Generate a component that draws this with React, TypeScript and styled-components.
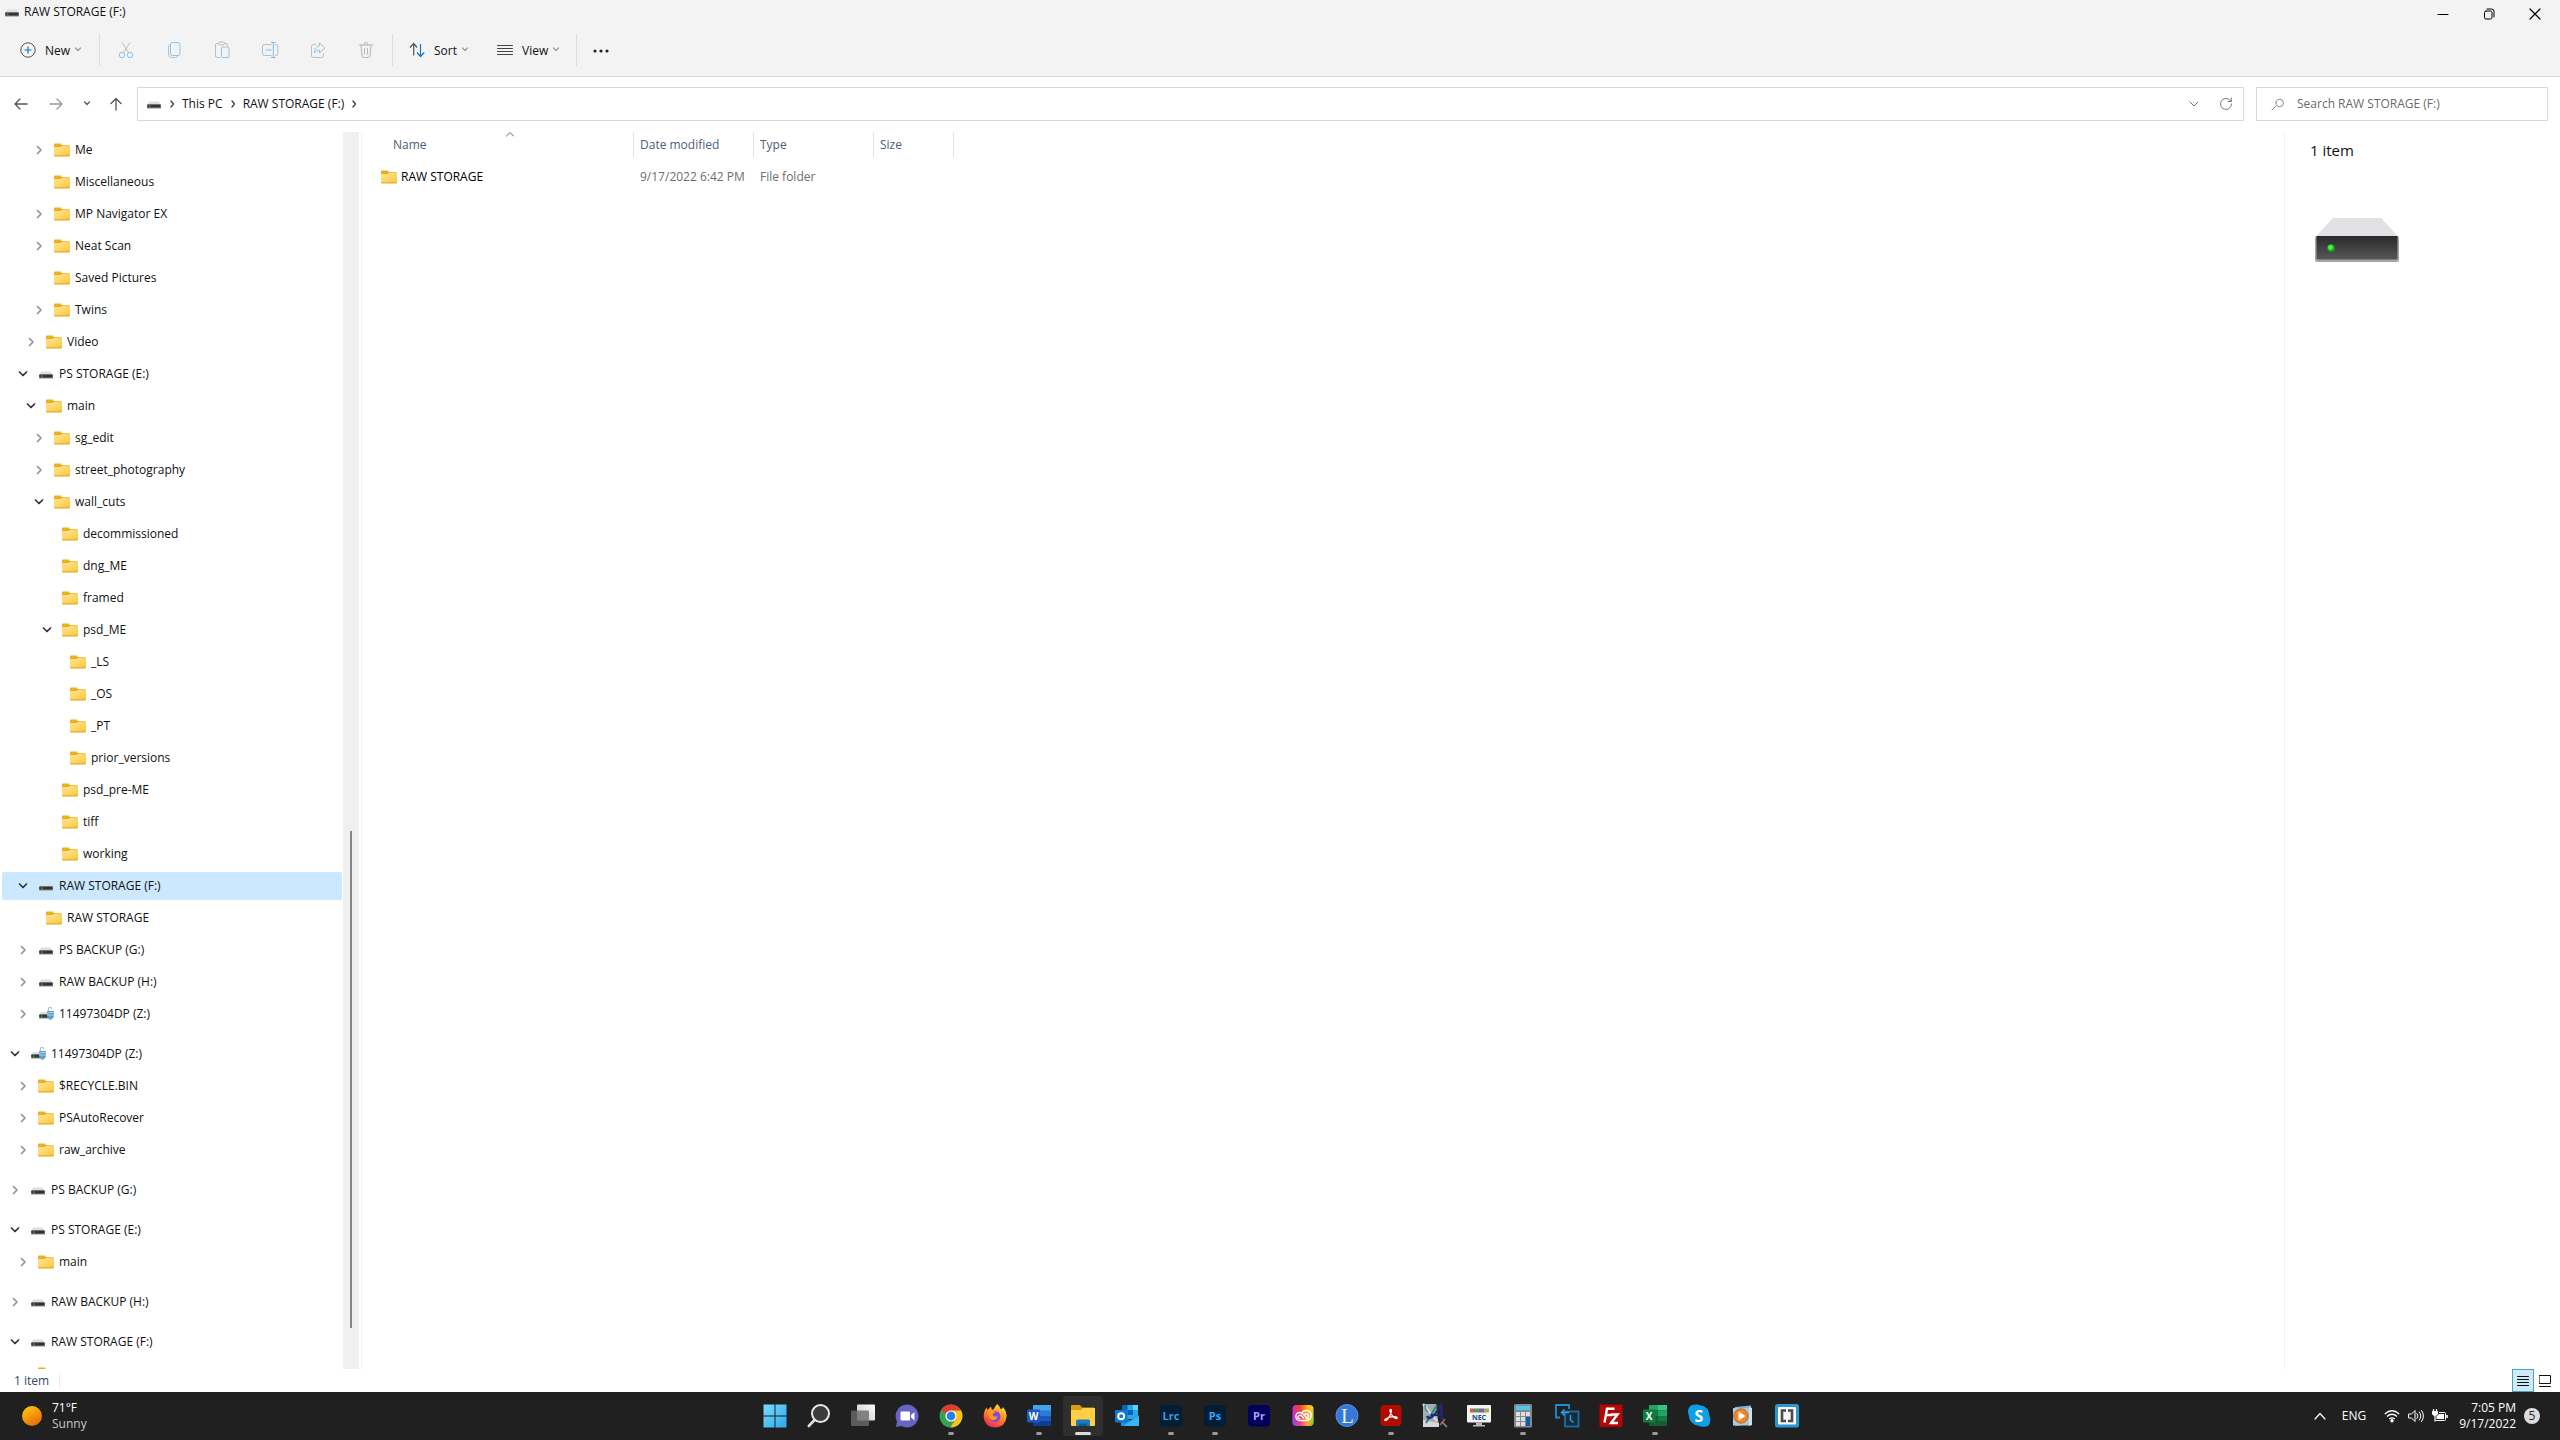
import React from "react";
import styled, { createGlobalStyle } from "styled-components";

const GlobalStyle = createGlobalStyle`
  * { box-sizing: border-box; }
  body { margin: 0; font-family: "Open Sans", "Noto Sans", sans-serif; font-size: 12px; line-height: 16px; color: #111; background: #fff; }
  button, input { font: inherit; color: inherit; border: 0; background: none; padding: 0; margin: 0; }
  svg { display: block; flex: none; }
`;

/* ---------- window frame ---------- */

const Desktop = styled.div`
  display: flex;
  flex-direction: column;
  height: 100vh;
  overflow: hidden;
`;

const TitleBar = styled.header`
  display: flex;
  justify-content: space-between;
  height: 28px;
  padding-left: 4px;
  background: #f3f3f3;
`;

const Title = styled.h1`
  display: flex;
  align-items: center;
  gap: 4px;
  height: 24px;
  margin: 0;
  font-size: 12px;
  font-weight: 400;
`;

const WindowButtons = styled.div`
  display: flex;
  padding-right: 2px;
`;

const WindowButton = styled.button`
  display: grid;
  place-items: center;
  width: 46px;
  height: 28px;
`;

const Toolbar = styled.div`
  display: flex;
  align-items: center;
  height: 49px;
  padding: 0 0 4px 12px;
  background: #f3f3f3;
  border-bottom: 1px solid #dcdcdc;
`;

const ToolButton = styled.button<{ $width: number }>`
  display: flex;
  align-items: center;
  width: ${(p) => p.$width}px;
  height: 32px;
  padding-left: 8px;
`;

const ToolLabel = styled.span`
  padding: 2px 4px 0 9px;
`;

const IconButton = styled.button<{ $width?: number }>`
  display: grid;
  place-items: center;
  width: ${(p) => p.$width ?? 48}px;
  height: 32px;
`;

const ToolDivider = styled.span<{ $before: number; $after: number }>`
  width: 1px;
  height: 32px;
  margin: 0 ${(p) => p.$after}px 0 ${(p) => p.$before}px;
  background: #dedede;
`;

const AddressRow = styled.div`
  display: flex;
  padding: 10px 12px 11px 4px;
`;

const NavButtons = styled.div`
  display: flex;
  align-items: center;
  padding-right: 5px;
`;

const AddressBar = styled.nav`
  display: flex;
  flex: 1;
  align-items: center;
  height: 34px;
  padding-left: 8px;
  border: 1px solid #d9d9d9;
`;

const Crumb = styled.button`
  height: 30px;
`;

const CrumbArrow = styled.span`
  display: grid;
  place-items: center;
  width: 20px;
`;

const AddressTools = styled.div`
  display: flex;
  margin-left: auto;
`;

const SearchBox = styled.label`
  display: flex;
  align-items: center;
  gap: 13px;
  width: 292px;
  height: 34px;
  margin-left: 12px;
  padding-left: 14px;
  border: 1px solid #d9d9d9;
`;

const SearchInput = styled.input`
  flex: 1;
  min-width: 0;
  outline: 0;
  &::placeholder { color: #6b6b6b; opacity: 1; }
`;

/* ---------- panes ---------- */

const Panes = styled.main`
  display: flex;
  flex: 1;
  min-height: 0;
`;

const TreePane = styled.aside`
  display: flex;
  width: 362px;
  padding-right: 2px;
  border-right: 1px solid #f2f2f2;
`;

const Tree = styled.ul`
  flex: 1;
  min-width: 0;
  margin: 0;
  padding: 2px 1px 0 2px;
  overflow: hidden;
  list-style: none;
`;

const TreeItem = styled.li<{ $gap: boolean }>`
  padding: ${(p) => (p.$gap ? 10 : 2)}px 0 2px;
`;

const TreeRow = styled.button<{ $level: number; $selected?: boolean }>`
  display: flex;
  align-items: center;
  width: 100%;
  height: 28px;
  padding-left: ${(p) => 7 + p.$level * 8}px;
  border-radius: 2px;
  background: ${(p) => (p.$selected ? "#cce8ff" : "transparent")};
`;

const Expander = styled.span`
  display: grid;
  place-items: center;
  width: 12px;
  height: 16px;
  margin-right: 9px;
`;

const RowLabel = styled.span`
  padding-left: 5px;
  white-space: nowrap;
`;

const ScrollTrack = styled.div`
  display: grid;
  grid-template-rows: 699fr 497fr 41fr;
  justify-items: center;
  width: 16px;
  background: #f0f0f0;
`;

const ScrollThumb = styled.div`
  grid-row: 2;
  width: 2px;
  background: #858585;
`;

const FilePane = styled.section`
  flex: 1;
  min-width: 0;
`;

const FileTable = styled.table`
  table-layout: fixed;
  width: 592px;
  border-collapse: separate;
  border-spacing: 0;
  text-align: left;
`;

const HeadCell = styled.th<{ $width: number; $indent?: number }>`
  position: relative;
  width: ${(p) => p.$width}px;
  height: 25px;
  padding: 0 0 0 ${(p) => p.$indent ?? 6}px;
  border-right: 1px solid #e2e2e2;
  color: #4c607a;
  font-weight: 400;
`;

const SortMark = styled.span`
  position: absolute;
  top: -1px;
  left: 50%;
  padding-left: 7px;
`;

const Cell = styled.td`
  height: 40px;
  padding: 0 0 0 6px;
  color: #6d6d6d;
  white-space: nowrap;
`;

const NameCell = styled(Cell)`
  padding-left: 19px;
  color: #000;
`;

const FileName = styled.span`
  display: flex;
  align-items: center;
  gap: 4px;
`;

const DetailPane = styled.aside`
  width: 276px;
  padding: 7px 0 0 25px;
  border-left: 1px solid #f2f2f2;
`;

const DetailTitle = styled.h2`
  margin: 0 0 57px;
  font-size: 15px;
  font-weight: 400;
  line-height: 22px;
`;

const DriveArt = styled.div`
  padding-left: 5px;
`;

const StatusBar = styled.footer`
  display: flex;
  align-items: center;
  justify-content: space-between;
  height: 23px;
  padding: 0 4px 0 14px;
  color: #33466b;
`;

const StatusText = styled.span`
  padding-right: 10px;
  border-right: 1px solid #ececec;
`;

const ViewButtons = styled.div`
  display: flex;
`;

const ViewButton = styled.button<{ $active?: boolean }>`
  display: grid;
  place-items: center;
  width: 22px;
  height: 23px;
  border: 1px solid ${(p) => (p.$active ? "#4ba3c3" : "transparent")};
  background: ${(p) => (p.$active ? "#cfeaf6" : "transparent")};
`;

/* ---------- taskbar ---------- */

const Taskbar = styled.footer`
  display: grid;
  grid-template-columns: 1fr auto 1fr;
  height: 48px;
  background: #202020;
  color: #fff;
`;

const Weather = styled.button`
  display: flex;
  align-items: center;
  gap: 10px;
  padding-left: 22px;
  text-align: left;
`;

const Muted = styled.span`
  display: block;
  color: #c8c8c8;
`;

const Apps = styled.div`
  display: flex;
  padding-left: 2px;
`;

const AppButton = styled.button<{ $active?: boolean }>`
  display: flex;
  flex-direction: column;
  align-items: center;
  justify-content: flex-end;
  gap: 4px;
  width: 40px;
  height: 40px;
  margin: 4px 2px;
  border-radius: 4px;
  background: ${(p) => (p.$active ? "#2f2f2f" : "transparent")};
`;

const RunMark = styled.span<{ $state: number }>`
  width: ${(p) => (p.$state === 2 ? 16 : 6)}px;
  height: 3px;
  margin-bottom: 1px;
  border-radius: 2px;
  background: ${(p) => (p.$state === 2 ? "#dcdcdc" : p.$state === 1 ? "#9a9a9a" : "transparent")};
`;

const Tray = styled.div`
  display: flex;
  align-items: center;
  justify-content: flex-end;
  padding-right: 20px;
`;

const TrayButton = styled.button<{ $width: number }>`
  display: grid;
  place-items: center;
  width: ${(p) => p.$width}px;
  height: 40px;
`;

const Clock = styled.button`
  width: 72px;
  padding-right: 8px;
  text-align: right;
`;

const Badge = styled.span`
  width: 16px;
  height: 16px;
  border-radius: 50%;
  background: #dcdcdc;
  color: #222;
  font-size: 12px;
  text-align: center;
`;

/* ---------- small icons ---------- */

const Line = ({ d, w = 16, h = 16, color = "#555", sw = 1 }: { d: string; w?: number; h?: number; color?: string; sw?: number }) => (
  <svg width={w} height={h} viewBox={`0 0 ${w} ${h}`} fill="none" stroke={color} strokeWidth={sw} strokeLinecap="round" strokeLinejoin="round">
    <path d={d} />
  </svg>
);

const ChevronDown = ({ color = "#9a9a9a" }: { color?: string }) => <Line w={8} h={8} d="M1.5 2l2.500 2.500L6.500 2" color={color} sw={1.2} />;
const CrumbChevron = () => <Line w={6} h={8} d="M2 1l2.5 3L2 7" color="#444" sw={1.4} />;

const FolderIcon = () => (
  <svg width="16" height="16" viewBox="0 0 16 16">
    <defs>
      <linearGradient id="folder" x1="0" y1="0" x2="1" y2="1">
        <stop offset="0" stopColor="#ffe694" />
        <stop offset="1" stopColor="#fcc63e" />
      </linearGradient>
    </defs>
    <path d="M0 2.5q0-1 1-1h5.5l1.8 1.7H15q1 0 1 1V8H0z" fill="#e8ae24" />
    <path d="M0 5h6.5l1.6-1H16v9.4q0 .8-1 .8H1q-1 0-1-.8z" fill="url(#folder)" />
    <path d="M.3 13.9h15.4" stroke="#dfa32b" />
  </svg>
);

const DriveIcon = () => (
  <svg width="16" height="16" viewBox="0 0 16 16">
    <path d="M3.5 5.5h9L15 9H1z" fill="#dedfe1" />
    <rect x="1" y="8.5" width="14" height="4" rx=".6" fill="#8b8b8b" />
    <rect x="1.5" y="8.5" width="13" height="3" fill="#333" />
    <rect x="3" y="9.5" width="1.4" height="1.2" fill="#3bdc4a" />
  </svg>
);

const LockedDriveIcon = () => (
  <svg width="16" height="16" viewBox="0 0 16 16">
    <path d="M3 6h8v3H1z" fill="#dedfe1" />
    <rect x="1" y="8.5" width="11" height="4" rx=".6" fill="#8b8b8b" />
    <rect x="1.5" y="8.5" width="10" height="3" fill="#333" />
    <rect x="3" y="9.5" width="1.4" height="1.2" fill="#3bdc4a" />
    <path d="M10.4 5V3.2q0-1.8 1.7-1.8 1.6 0 1.8 1.6" fill="none" stroke="#b9bcc2" strokeWidth="1.2" />
    <path d="M9 5h7v5q0 2-3.5 3.4Q9 12 9 10z" fill="#5aa1d3" />
    <path d="M9 6.7h7M9 9h7" stroke="#b6d9ef" strokeWidth=".9" />
    <path d="M10 11.5q2.500 2 5 0l-1 1.700-1.500 .8-1.500-.8z" fill="#9ea3a8" />
  </svg>
);

const BigDrive = () => (
  <svg width="84" height="44" viewBox="0 0 84 44">
    <defs>
      <linearGradient id="front" x1="0" y1="0" x2="0" y2="1">
        <stop offset="0" stopColor="#2a2a2a" />
        <stop offset="1" stopColor="#575757" />
      </linearGradient>
    </defs>
    <path d="M18 0h48l17 18.500H1z" fill="#e1e1e5" />
    <rect y="18" width="84" height="26" rx="2" fill="#a6a6a6" />
    <path d="M1.500 18h81v22q0 1.500-1.500 1.500H3q-1.500 0-1.500-1.500z" fill="url(#front)" />
    <circle cx="16" cy="30" r="3.800" fill="#18a91e" />
    <circle cx="15.500" cy="29.500" r="2.400" fill="#4df04d" />
  </svg>
);

/* ---------- toolbar icons ---------- */

const NewIcon = () => (
  <svg width="16" height="16" viewBox="0 0 16 16" fill="none">
    <circle cx="8" cy="8" r="7.200" stroke="#555" />
    <path d="M8 4.500v7M4.500 8h7" stroke="#1078c8" strokeWidth="1.200" />
  </svg>
);
const CutIcon = () => (
  <svg width="16" height="18" viewBox="0 0 16 18" fill="none">
    <path d="M4 1.500l6.500 10M12 1.500l-6.500 10" stroke="#bdbdbd" />
    <circle cx="4" cy="14" r="2.700" stroke="#92c3e6" />
    <circle cx="12" cy="14" r="2.700" stroke="#92c3e6" />
  </svg>
);
const CopyIcon = () => (
  <svg width="16" height="18" viewBox="0 0 16 18" fill="none">
    <path d="M4.500 3.500Q2.500 4 2.500 6v7.500q0 3 3 3h4q1.500 0 2-1.500" stroke="#a9c2d4" />
    <rect x="4.500" y="1.500" width="9.500" height="13" rx="2" stroke="#92c3e6" />
  </svg>
);
const PasteIcon = () => (
  <svg width="16" height="18" viewBox="0 0 16 18" fill="none">
    <path d="M6 16.500H3q-1.500 0-1.500-1.500V4q0-1.500 1.500-1.500h1.500m6 0H12q1.500 0 1.500 1.500v.8" stroke="#bdbdbd" />
    <rect x="4.500" y="1" width="6" height="2.800" rx="1.200" stroke="#bdbdbd" />
    <rect x="7.500" y="6" width="7.500" height="10.500" rx="1" stroke="#92c3e6" />
  </svg>
);
const RenameIcon = () => (
  <svg width="18" height="18" viewBox="0 0 18 18" fill="none">
    <path d="M10.500 3.500H3.500q-2 0-2 2v7q0 2 2 2h7M14 3.500h.8q2 0 2 2v7q0 2-2 2H14" stroke="#b5bcc2" />
    <path d="M10 1.500h4.500M10 16.500h4.500M12.300 1.500v15M4.500 9h6" stroke="#7fb9e2" />
  </svg>
);
const ShareIcon = () => (
  <svg width="16" height="18" viewBox="0 0 16 18" fill="none">
    <path d="M6 3.500H3.500q-2 0-2 2v9q0 2 2 2h8q2 0 2-2v-2" stroke="#bdbdbd" />
    <path d="M9.500 2l5.500 5-5.500 5V9.300Q6 9 4.500 12q0-6.500 5-7.200z" stroke="#92c3e6" strokeLinejoin="round" />
  </svg>
);
const TrashIcon = () => <Line w={16} h={18} color="#b5b5b5" d="M1.500 4h13M6 4Q6 1.500 8 1.500T10 4M3 4l1 11q.2 1.500 1.500 1.500h5q1.300 0 1.500-1.500l1-11M6.500 7.500v5.500M9.500 7.500v5.500" />;
const SortIcon = () => (
  <svg width="16" height="16" viewBox="0 0 16 16" fill="none">
    <path d="M1 5.500l3.700-4 3.300 4M4.700 2v11.500" stroke="#555" strokeWidth="1.200" />
    <path d="M8 10.500l3.500 4 3.700-4M11.500 2v12" stroke="#1078c8" strokeWidth="1.200" />
  </svg>
);

/* ---------- taskbar icons ---------- */

const AppSvg = ({ children }: { children: React.ReactNode }) => (
  <svg width="24" height="24" viewBox="0 0 24 24" overflow="visible">{children}</svg>
);

const IconText = styled.text<{ $size: number; $serif?: boolean }>`
  font-family: ${(p) => (p.$serif ? '"Liberation Serif", serif' : '"Open Sans", sans-serif')};
  font-size: ${(p) => p.$size}px;
  font-weight: ${(p) => (p.$serif ? 400 : 700)};
  text-anchor: middle;
`;

const AdobeTile = ({ bg, fg, label }: { bg: string; fg: string; label: string }) => (
  <AppSvg>
    <rect x="1" y="1" width="22" height="21.500" rx="4" fill={bg} />
    <IconText x="12" y="16" $size={11} fill={fg}>{label}</IconText>
  </AppSvg>
);

const appList: { name: string; state?: number; icon: React.ReactNode }[] = [
  {
    name: "Start",
    icon: (
      <AppSvg>
        <defs>
          <linearGradient id="win" x1="0" y1="0" x2="1" y2="1" gradientUnits="objectBoundingBox">
            <stop offset="0" stopColor="#7bdcfb" />
            <stop offset="1" stopColor="#2aa7ee" />
          </linearGradient>
        </defs>
        <path d="M.5.500h11v11H.5zM12.500.500h11v11h-11zM.5 12.500h11v11H.5zM12.500 12.500h11v11h-11z" fill="url(#win)" />
      </AppSvg>
    ),
  },
  {
    name: "Search",
    icon: (
      <AppSvg>
        <path d="M7.500 16L1.800 22" stroke="#ddd" strokeWidth="2.600" strokeLinecap="round" />
        <circle cx="13.500" cy="9.500" r="8.500" fill="#3b3b3b" stroke="#e8e8e8" strokeWidth="2" />
      </AppSvg>
    ),
  },
  {
    name: "Task View",
    icon: (
      <AppSvg>
        <defs>
          <linearGradient id="task" x1="1" y1="0" x2="0" y2="1">
            <stop offset="0" stopColor="#fff" />
            <stop offset="1" stopColor="#c4c4c4" />
          </linearGradient>
        </defs>
        <rect x="6" y=".5" width="18" height="16" rx="1" fill="url(#task)" />
        <rect x="0" y="6.500" width="18" height="15.500" rx="1" fill="#6b6b6b" opacity=".8" />
      </AppSvg>
    ),
  },
  {
    name: "Chat",
    icon: (
      <AppSvg>
        <path d="M12 .5a11.500 11.500 0 1 1-5.500 21.600L1 23l1-5.500A11.500 11.500 0 0 1 12 .5z" fill="#6764c4" />
        <rect x="5.500" y="7.500" width="9.500" height="9" rx="1" fill="#fff" />
        <path d="M16 11l3.500-3v8.500L16 13.500z" fill="#fff" />
      </AppSvg>
    ),
  },
  {
    name: "Chrome",
    state: 1,
    icon: (
      <AppSvg>
        <circle cx="12" cy="12" r="11.500" fill="#34a153" />
        <path d="M12 12L2 6.200A11.500 11.500 0 0 1 22 6.500z" fill="#e23b2e" />
        <path d="M12 6.500h10A11.500 11.500 0 0 1 11.500 23.500L17 14z" fill="#fbc116" />
        <circle cx="12" cy="12" r="5.600" fill="#fff" />
        <circle cx="12" cy="12" r="4.400" fill="#2b7de9" />
      </AppSvg>
    ),
  },
  {
    name: "Firefox",
    icon: (
      <AppSvg>
        <defs>
          <linearGradient id="fox" x1=".8" y1="0" x2=".3" y2="1">
            <stop offset="0" stopColor="#ffe23c" />
            <stop offset=".5" stopColor="#ff8a1f" />
            <stop offset="1" stopColor="#f0245c" />
          </linearGradient>
        </defs>
        <path d="M14 0q3 2 3.500 5Q20 5 20 3q4 5 3.500 10-1 10-11.500 10.500Q1.500 23 .7 13 .6 7 3.500 3.500L4.500 6 8 2.500Q8 5 10 6z" fill="url(#fox)" />
        <circle cx="12" cy="12.500" r="5.500" fill="#8a48d8" />
        <path d="M5 8q4-2 8 .5-3 0-3.500 2.500 2 3 5 1-1 4.500-5 4-4-1-4.500-8z" fill="#ff9a22" />
      </AppSvg>
    ),
  },
  {
    name: "Word",
    state: 1,
    icon: (
      <AppSvg>
        <path d="M6 1h18v6H6z" fill="#41a5ee" />
        <path d="M6 6.500h18V12H6z" fill="#2b7cd3" />
        <path d="M6 12h18v5.500H6z" fill="#185abd" />
        <path d="M6 17.500h18V22H6z" fill="#103f91" />
        <rect x="0" y="5.500" width="13" height="13" rx="1" fill="#185abd" />
        <IconText x="6.500" y="15.500" $size={10} fill="#fff">W</IconText>
      </AppSvg>
    ),
  },
  {
    name: "File Explorer",
    state: 2,
    icon: (
      <AppSvg>
        <path d="M0 2q0-1 1-1h8l2 2.500h12v6H0z" fill="#d99c14" />
        <path d="M0 6h10l2-2h12v17q0 1-1 1H1q-1 0-1-1z" fill="#ffcf48" />
        <path d="M5 22v-5q0-1.500 1.500-1.500h11Q19 15.500 19 17v5z" fill="#1a7bbf" />
        <path d="M8 22v-2.500h8V22z" fill="#115a94" />
      </AppSvg>
    ),
  },
  {
    name: "Outlook",
    icon: (
      <AppSvg>
        <rect x="7" y="1" width="16" height="14" fill="#28a8ea" />
        <path d="M7 1h5.500v5H7zM12.500 6H18v5h-5.500z" fill="#0364b8" />
        <path d="M18 1h5v5h-5z" fill="#50d9ff" />
        <path d="M6 11.500l9 5 9-5V22H6z" fill="#1490df" />
        <path d="M24 11.500V22H8z" fill="#35b8f1" />
        <rect x="0" y="6" width="12.500" height="12.500" rx="1" fill="#0f78d4" />
        <circle cx="6.200" cy="12.200" r="3" fill="none" stroke="#fff" strokeWidth="2" />
      </AppSvg>
    ),
  },
  { name: "Lightroom Classic", state: 1, icon: <AdobeTile bg="#001e36" fg="#3f9fd6" label="Lrc" /> },
  { name: "Photoshop", state: 1, icon: <AdobeTile bg="#001e36" fg="#31a8ff" label="Ps" /> },
  { name: "Premiere Pro", icon: <AdobeTile bg="#00005b" fg="#a9a2ff" label="Pr" /> },
  {
    name: "Creative Cloud",
    icon: (
      <AppSvg>
        <defs>
          <linearGradient id="ccTop" x1="0" y1="0" x2="1" y2="0">
            <stop offset="0" stopColor="#d92bd0" />
            <stop offset=".35" stopColor="#f2402f" />
            <stop offset=".75" stopColor="#ffb91f" />
            <stop offset="1" stopColor="#e6d92a" />
          </linearGradient>
          <linearGradient id="ccBottom" x1="0" y1="0" x2="1" y2="0">
            <stop offset="0" stopColor="#6d4cf5" />
            <stop offset=".4" stopColor="#e8409a" />
            <stop offset=".7" stopColor="#f2a13a" />
            <stop offset="1" stopColor="#62c936" />
          </linearGradient>
          <linearGradient id="ccFade" x1="0" y1="0" x2="0" y2="1">
            <stop offset=".2" stopColor="#000" />
            <stop offset="1" stopColor="#fff" />
          </linearGradient>
          <mask id="ccMask"><rect width="24" height="24" fill="url(#ccFade)" /></mask>
        </defs>
        <rect x="1.500" y="1" width="21" height="21" rx="4" fill="url(#ccTop)" />
        <rect x="1.500" y="1" width="21" height="21" rx="4" fill="url(#ccBottom)" mask="url(#ccMask)" />
        <path d="M8.800 16.500a4 4 0 1 1 0-8q1.800 0 3 1.300l4 4M8.800 16.500h6.400a5 5 0 1 0-4.600-7M12.500 13.800q-3.500-4.500-5.500-1.200-.5 2 1.800 2M13 10.500q3-2 4.500 1 .5 3-2.300 3" fill="none" stroke="#fff" strokeWidth="1.400" strokeLinecap="round" />
      </AppSvg>
    ),
  },
  {
    name: "Lexicon",
    icon: (
      <AppSvg>
        <circle cx="12" cy="11.500" r="11" fill="#3478d8" stroke="#5b93e0" />
        <IconText x="12.500" y="18.500" $size={21} $serif fill="#e5eefb">L</IconText>
      </AppSvg>
    ),
  },
  {
    name: "Acrobat",
    state: 1,
    icon: (
      <AppSvg>
        <rect x="1.500" y="1" width="21" height="21" rx="4" fill="#b30b00" />
        <path d="M11.300 5.500q1.500-.5 1 2-.5 3.500-3.300 7-2 2.500-3 2-.8-1.200 2.500-2.500 3.500-1.300 7-1.300 3 .1 2.600 1.500-1 1-3.600-1.300-3-2.800-3.400-5.400-.3-1.700.2-2z" fill="none" stroke="#fff" strokeWidth="1.300" strokeLinejoin="round" />
      </AppSvg>
    ),
  },
  {
    name: "Art Tools",
    icon: (
      <AppSvg>
        <path d="M0 0h13l3 23H0z" fill="#a7a9ba" />
        <path d="M0 0l14 17" stroke="#d4d8dc" strokeWidth="2.400" />
        <path d="M0 16l16 3v4H0z" fill="#d5d7df" />
        <path d="M14 1L3 19" stroke="#2b8a69" strokeWidth="2" />
        <path d="M2 1q0 5 3 7" fill="none" stroke="#3f9a78" strokeWidth="1.600" />
        <path d="M4 12q2 5 8-2l6-9 1 15M8 11h12" fill="none" stroke="#23277a" strokeWidth="2.200" />
        <path d="M17 21l5-6" stroke="#b8525c" strokeWidth="1.800" />
        <path d="M19 18l5 5" stroke="#8c8c8c" strokeWidth="1.600" />
      </AppSvg>
    ),
  },
  {
    name: "NEC Display",
    icon: (
      <AppSvg>
        <rect x="0" y="1" width="24" height="17.500" rx="1" fill="#f4f4f4" />
        <path d="M3 4.500h4v4H3z" fill="#d8574a" />
        <path d="M7 4.500h5v4H7z" fill="#4c9b62" />
        <path d="M12 4.500h5v4h-5z" fill="#8959a5" />
        <path d="M17 4.500h5v4h-5z" fill="#9db455" />
        <IconText x="12" y="16" $size={7} fill="#154a93">NEC</IconText>
        <path d="M9 18.500h6V21h3v1.500H6V21h3z" fill="#b9b9b9" />
      </AppSvg>
    ),
  },
  {
    name: "Calculator",
    state: 1,
    icon: (
      <AppSvg>
        <rect x="3" y="0" width="18" height="23.500" rx="1.500" fill="#85888c" />
        <rect x="5" y="2" width="14" height="4" fill="#4cc8f4" />
        <path d="M5 8h4v4H5zM10 8h4v4h-4zM15 8h4v4h-4zM5 13h4v4H5zM10 13h4v4h-4zM5 18h4v4H5zM10 18h4v4h-4z" fill="#dcdfe2" />
        <path d="M15 13h4v9h-4z" fill="#1259a8" />
      </AppSvg>
    ),
  },
  {
    name: "File History",
    icon: (
      <AppSvg>
        <path d="M5 13.500H1V1h13v4" fill="none" stroke="#1b8fd2" strokeWidth="1.800" />
        <rect x="10" y="7.500" width="13.500" height="15" fill="#162b3b" stroke="#176fa8" strokeWidth="1.800" />
        <path d="M14 8.500H7.500M9.500 5.500l-3 3 3 3" fill="none" stroke="#2a9fe2" strokeWidth="1.600" />
        <path d="M15.500 11v5l3 2.500" fill="none" stroke="#2a9fe2" strokeWidth="1.500" />
      </AppSvg>
    ),
  },
  {
    name: "FileZilla",
    icon: (
      <AppSvg>
        <rect x=".5" y=".5" width="23" height="22.500" fill="#b30808" stroke="#7d0303" strokeDasharray="1.500 1" />
        <path d="M5.500 18.500L8 4.800h7.500M7 11h6M12 10.500h6.500l-6.500 8.500h7" fill="none" stroke="#fff" strokeWidth="2.400" />
      </AppSvg>
    ),
  },
  {
    name: "Excel",
    state: 1,
    icon: (
      <AppSvg>
        <path d="M6 1h9v5.500H6z" fill="#21a366" />
        <path d="M15 1h9v5.500h-9z" fill="#33c481" />
        <path d="M6 6.500h9V12H6z" fill="#107c41" />
        <path d="M15 6.500h9V12h-9z" fill="#21a366" />
        <path d="M6 12h18v10H6z" fill="#185c37" />
        <path d="M15 12h9v5h-9z" fill="#107c41" />
        <rect x="0" y="5.500" width="12.500" height="13" rx="1" fill="#107c41" />
        <IconText x="6.200" y="15.500" $size={10} fill="#fff">X</IconText>
      </AppSvg>
    ),
  },
  {
    name: "Skype",
    icon: (
      <AppSvg>
        <path d="M7 .8Q11 .3 13 1.200q9 1 9.500 11 .9 2 .7 5Q22.500 23 17 22.800q-3 .3-5-1Q2 20.500 1.800 11 .8 9 1 6.500 1.800 1.500 7 .8z" fill="#0f9fe8" />
        <IconText x="12" y="17.500" $size={16} fill="#fff">S</IconText>
      </AppSvg>
    ),
  },
  {
    name: "Media Player",
    icon: (
      <AppSvg>
        <path d="M4 3l16-1.500V20L4 22z" fill="#7fb4d8" />
        <path d="M18 3l3 1v17l-3 1z" fill="#cfe1ee" />
        <path d="M2 4h16v17.500H2z" fill="#a9cbe2" />
        <circle cx="10" cy="12" r="7.200" fill="#f0862a" stroke="#c5681c" />
        <path d="M7.500 7.500l7 4.500-7 4.500z" fill="#fff" />
      </AppSvg>
    ),
  },
  {
    name: "Brackets",
    icon: (
      <AppSvg>
        <rect x="0" y="0" width="24" height="23.500" rx="2.500" fill="#2d95cf" />
        <rect x="3" y="3" width="18" height="17.500" rx="1" fill="#f7f7f7" />
        <path d="M11 6.500H7V17h4M13 6.500h4V17h-4" fill="none" stroke="#4a4a4a" strokeWidth="2.600" />
      </AppSvg>
    ),
  },
];

/* ---------- data ---------- */

type Node = { label: string; level: number; open?: boolean; icon?: "drive" | "locked"; selected?: boolean };

const nodes: Node[] = [
  { label: "Me", level: 3, open: false },
  { label: "Miscellaneous", level: 3 },
  { label: "MP Navigator EX", level: 3, open: false },
  { label: "Neat Scan", level: 3, open: false },
  { label: "Saved Pictures", level: 3 },
  { label: "Twins", level: 3, open: false },
  { label: "Video", level: 2, open: false },
  { label: "PS STORAGE (E:)", level: 1, open: true, icon: "drive" },
  { label: "main", level: 2, open: true },
  { label: "sg_edit", level: 3, open: false },
  { label: "street_photography", level: 3, open: false },
  { label: "wall_cuts", level: 3, open: true },
  { label: "decommissioned", level: 4 },
  { label: "dng_ME", level: 4 },
  { label: "framed", level: 4 },
  { label: "psd_ME", level: 4, open: true },
  { label: "_LS", level: 5 },
  { label: "_OS", level: 5 },
  { label: "_PT", level: 5 },
  { label: "prior_versions", level: 5 },
  { label: "psd_pre-ME", level: 4 },
  { label: "tiff", level: 4 },
  { label: "working", level: 4 },
  { label: "RAW STORAGE (F:)", level: 1, open: true, icon: "drive", selected: true },
  { label: "RAW STORAGE", level: 2 },
  { label: "PS BACKUP (G:)", level: 1, open: false, icon: "drive" },
  { label: "RAW BACKUP (H:)", level: 1, open: false, icon: "drive" },
  { label: "11497304DP (Z:)", level: 1, open: false, icon: "locked" },
  { label: "11497304DP (Z:)", level: 0, open: true, icon: "locked" },
  { label: "$RECYCLE.BIN", level: 1, open: false },
  { label: "PSAutoRecover", level: 1, open: false },
  { label: "raw_archive", level: 1, open: false },
  { label: "PS BACKUP (G:)", level: 0, open: false, icon: "drive" },
  { label: "PS STORAGE (E:)", level: 0, open: true, icon: "drive" },
  { label: "main", level: 1, open: false },
  { label: "RAW BACKUP (H:)", level: 0, open: false, icon: "drive" },
  { label: "RAW STORAGE (F:)", level: 0, open: true, icon: "drive" },
  { label: "", level: 1 },
];

const TreeNode = ({ node }: { node: Node }) => (
  <TreeItem $gap={node.level === 0}>
    <TreeRow $level={node.level} $selected={node.selected} aria-expanded={node.open}>
      <Expander>
        {node.open === true && <Line w={10} h={8} d="M1.500 2l3.500 3.500L8.500 2" color="#333" sw={1.700} />}
        {node.open === false && <Line w={8} h={10} d="M2.500 1.500L6 5 2.500 8.500" color="#8a8a8a" sw={1.500} />}
      </Expander>
      {node.icon === "drive" ? <DriveIcon /> : node.icon === "locked" ? <LockedDriveIcon /> : <FolderIcon />}
      <RowLabel>{node.label}</RowLabel>
    </TreeRow>
  </TreeItem>
);

export default function App() {
  return (
    <Desktop>
      <GlobalStyle />
      <TitleBar>
        <Title>
          <DriveIcon />
          RAW STORAGE (F:)
        </Title>
        <WindowButtons>
          <WindowButton aria-label="Minimize"><Line w={12} h={12} d="M1 6.500h10" color="#000" /></WindowButton>
          <WindowButton aria-label="Restore">
            <Line w={12} h={12} d="M3 3h4.500Q9 3 9 4.500v5Q9 11 7.500 11H3Q1.500 11 1.500 9.500v-5Q1.500 3 3 3M4 1h4.500Q11 1 11 3.500V9" color="#000" />
          </WindowButton>
          <WindowButton aria-label="Close"><Line w={12} h={12} d="M1 1l10 10M11 1L1 11" color="#000" sw={1.200} /></WindowButton>
        </WindowButtons>
      </TitleBar>

      <Toolbar>
        <ToolButton $width={86}><NewIcon /><ToolLabel>New</ToolLabel><ChevronDown /></ToolButton>
        <ToolDivider $before={1} $after={2} />
        <IconButton aria-label="Cut"><CutIcon /></IconButton>
        <IconButton aria-label="Copy"><CopyIcon /></IconButton>
        <IconButton aria-label="Paste"><PasteIcon /></IconButton>
        <IconButton aria-label="Rename"><RenameIcon /></IconButton>
        <IconButton aria-label="Share"><ShareIcon /></IconButton>
        <IconButton aria-label="Delete"><TrashIcon /></IconButton>
        <ToolDivider $before={2} $after={8} />
        <ToolButton $width={88}><SortIcon /><ToolLabel>Sort</ToolLabel><ChevronDown /></ToolButton>
        <ToolButton $width={86}>
          <Line d="M.5 3.500h15M.5 6.500h15M.5 9.500h15M.5 12.500h15" color="#444" />
          <ToolLabel>View</ToolLabel>
          <ChevronDown />
        </ToolButton>
        <ToolDivider $before={1} $after={0} />
        <IconButton aria-label="See more">
          <svg width="16" height="16" viewBox="0 0 16 16" fill="#222">
            <circle cx="2" cy="9" r="1.600" /><circle cx="8" cy="9" r="1.600" /><circle cx="14" cy="9" r="1.600" />
          </svg>
        </IconButton>
      </Toolbar>

      <AddressRow>
        <NavButtons>
          <IconButton $width={34} aria-label="Back"><Line d="M14 8H2.500M7 3L2 8l5 5" color="#555" sw={1.300} /></IconButton>
          <IconButton $width={36} aria-label="Forward"><Line d="M2 8h11.500M9 3l5 5-5 5" color="#999" sw={1.300} /></IconButton>
          <IconButton $width={25} aria-label="Recent locations"><ChevronDown color="#555" /></IconButton>
          <IconButton $width={33} aria-label="Up"><Line d="M8 14V2.500M3 7.500l5-5 5 5" color="#555" sw={1.300} /></IconButton>
        </NavButtons>
        <AddressBar aria-label="Address">
          <DriveIcon />
          <CrumbArrow><CrumbChevron /></CrumbArrow>
          <Crumb>This PC</Crumb>
          <CrumbArrow><CrumbChevron /></CrumbArrow>
          <Crumb>RAW STORAGE (F:)</Crumb>
          <CrumbArrow><CrumbChevron /></CrumbArrow>
          <AddressTools>
            <IconButton $width={30} aria-label="Previous locations"><Line w={10} h={8} d="M1 2l4 4 4-4" color="#777" /></IconButton>
            <IconButton $width={34} aria-label="Refresh"><Line w={14} h={14} d="M12.500 7A5.500 5.500 0 1 1 10.500 2.700L12 4.500M12.300 1v3.500H9" color="#777" /></IconButton>
          </AddressTools>
        </AddressBar>
        <SearchBox>
          <Line w={13} h={13} d="M5 8L1 12M5 5a3.700 3.700 0 1 1 7.400 0a3.700 3.700 0 1 1-7.400 0" color="#888" />
          <SearchInput type="text" aria-label="Search" placeholder="Search RAW STORAGE (F:)" />
        </SearchBox>
      </AddressRow>

      <Panes>
        <TreePane>
          <Tree>
            {nodes.map((node, i) => <TreeNode key={i} node={node} />)}
          </Tree>
          <ScrollTrack><ScrollThumb /></ScrollTrack>
        </TreePane>
        <FilePane>
          <FileTable>
            <thead>
              <tr>
                <HeadCell $width={272} $indent={31}>
                  Name
                  <SortMark><Line w={10} h={6} d="M1.500 5L5 1.500 8.500 5" color="#666" /></SortMark>
                </HeadCell>
                <HeadCell $width={120}>Date modified</HeadCell>
                <HeadCell $width={120}>Type</HeadCell>
                <HeadCell $width={80}>Size</HeadCell>
              </tr>
            </thead>
            <tbody>
              <tr>
                <NameCell><FileName><FolderIcon />RAW STORAGE</FileName></NameCell>
                <Cell>9/17/2022 6:42 PM</Cell>
                <Cell>File folder</Cell>
                <Cell />
              </tr>
            </tbody>
          </FileTable>
        </FilePane>
        <DetailPane>
          <DetailTitle>1 item</DetailTitle>
          <DriveArt><BigDrive /></DriveArt>
        </DetailPane>
      </Panes>

      <StatusBar>
        <StatusText>1 item</StatusText>
        <ViewButtons>
          <ViewButton $active aria-label="Details view">
            <Line w={12} h={12} d="M.5 1.500h11M.5 4.500h11M.5 7.500h11M.5 10.500h11" color="#111" />
          </ViewButton>
          <ViewButton aria-label="Large icons view">
            <Line w={12} h={12} d="M.5.500h11v8H.5zM.5 11.500h11" color="#111" />
          </ViewButton>
        </ViewButtons>
      </StatusBar>

      <Taskbar>
        <Weather>
          <svg width="20" height="20" viewBox="0 0 20 20">
            <defs>
              <linearGradient id="sun" x1="0.200" y1="0" x2=".8" y2="1">
                <stop offset="0" stopColor="#fdc60b" />
                <stop offset="1" stopColor="#e8650d" />
              </linearGradient>
            </defs>
            <circle cx="10" cy="10" r="10" fill="url(#sun)" />
          </svg>
          <span>71°F<Muted>Sunny</Muted></span>
        </Weather>
        <Apps>
          {appList.map((app) => (
            <AppButton key={app.name} $active={app.state === 2} aria-label={app.name}>
              {app.icon}
              <RunMark $state={app.state ?? 0} />
            </AppButton>
          ))}
        </Apps>
        <Tray>
          <TrayButton $width={16} aria-label="Show hidden icons"><Line w={12} h={8} d="M1 7l5-5.500L11 7" color="#fff" sw={1.200} /></TrayButton>
          <TrayButton $width={52}>ENG</TrayButton>
          <TrayButton $width={24} aria-label="Network">
            <svg width="16" height="14" viewBox="0 0 16 14" fill="none" stroke="#fff" strokeWidth="1.200">
              <path d="M.8 5Q8-1.500 15.200 5M3 7.500q5-4.500 10 0M5.200 10q2.800-2.400 5.600 0" />
              <circle cx="8" cy="11.800" r="1.100" fill="#fff" />
            </svg>
          </TrayButton>
          <TrayButton $width={24} aria-label="Volume">
            <Line w={16} h={14} d="M1 5h2.500L7 1.500v11L3.500 9H1zM9 4.500q2 2.500 0 5M11.300 3q3 4 0 8M13.500 1.500q4 5.500 0 11" color="#fff" />
          </TrayButton>
          <TrayButton $width={24} aria-label="Battery">
            <svg width="16" height="14" viewBox="0 0 16 14" fill="none" stroke="#fff">
              <path d="M1.500 0v2.500M4.500 0v2.500M3 6v6.500" strokeWidth="1.200" />
              <path d="M.5 2.500h5V5Q5.500 6 3 6.500.5 6 .5 5z" fill="#fff" />
              <path d="M7 3.500h5.500q1 0 1 1v6q0 1-1 1H3.500" />
              <path d="M7 5h5v5H4.500V7.500z" fill="#fff" stroke="none" />
              <path d="M15 6v3" strokeWidth="1.600" />
            </svg>
          </TrayButton>
          <Clock>7:05 PM<br />9/17/2022</Clock>
          <Badge>5</Badge>
        </Tray>
      </Taskbar>
    </Desktop>
  );
}
